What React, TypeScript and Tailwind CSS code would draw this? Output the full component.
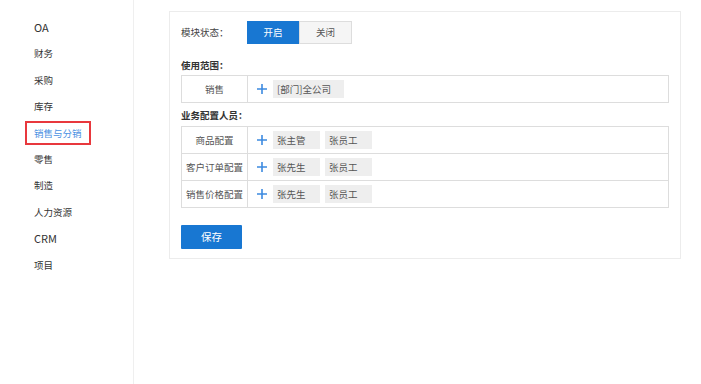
import React from 'react';

const menu = ['OA', '财务', '采购', '库存', '销售与分销', '零售', '制造', '人力资源', 'CRM', '项目'];

const staff = [
  { label: '商品配置', people: ['张主管', '张员工'] },
  { label: '客户订单配置', people: ['张先生', '张员工'] },
  { label: '销售价格配置', people: ['张先生', '张员工'] },
];

function Plus() {
  return (
    <svg width="10" height="10" viewBox="0 0 10 10" className="shrink-0">
      <path d="M5 0v10M0 5h10" stroke="#3d8ae0" strokeWidth="1.6" />
    </svg>
  );
}

function Tag({ text, w }: { text: string; w: string }) {
  return (
    <span className={`flex h-[18px] items-center bg-[#eeeeee] pl-[4px] text-[#555] ${w}`}>{text}</span>
  );
}

export default function App() {
  return (
    <div
      className="flex h-[384px] w-[701px] bg-white text-[9.5px] text-[#333]"
      style={{ fontFamily: '"Noto Sans CJK SC", "Noto Sans", sans-serif' }}
    >
      <aside className="w-[134px] shrink-0 border-r border-[#efefef] pt-[14px]">
        {menu.map((m) => {
          const active = m === '销售与分销';
          return (
            <div key={m} className="flex h-[26.4px] items-center pl-[25px]">
              <span
                className={`flex h-[24px] items-center border-2 px-[7px] ${
                  active ? 'border-[#e8383d] text-[#4a90e2]' : 'border-transparent'
                } ${m === 'OA' || m === 'CRM' ? 'text-[11px]' : ''}`}
              >
                {m}
              </span>
            </div>
          );
        })}
      </aside>

      <main className="pl-[35px] pt-[11px]">
        <div className="h-[248px] w-[512px] border border-[#ececec] px-[11px] pt-[9px]">
          <div className="flex items-center">
            <span className="w-[66px] text-[#444]">模块状态：</span>
            <div className="flex h-[23px]">
              <button className="w-[52px] bg-[#1877d2] text-white">开启</button>
              <button className="w-[53px] border border-[#dddddd] bg-[#f5f5f5] text-[#555]">关闭</button>
            </div>
          </div>

          <div className="mt-[13px] flex h-[16px] items-center font-bold">使用范围：</div>
          <table className="mt-[2px] w-full border-collapse">
            <tbody>
              <tr className="h-[27px]">
                <td className="w-[66px] border border-[#dddddd] text-center text-[#555]">销售</td>
                <td className="border border-[#dddddd] pl-[9px]">
                  <div className="flex items-center gap-[6px]">
                    <Plus />
                    <Tag text="[部门]全公司" w="w-[71px]" />
                  </div>
                </td>
              </tr>
            </tbody>
          </table>

          <div className="mt-[4px] flex h-[16px] items-center font-bold">业务配置人员：</div>
          <table className="mt-[3px] w-full border-collapse">
            <tbody>
              {staff.map((r) => (
                <tr key={r.label} className="h-[27px]">
                  <td className="w-[66px] border border-[#dddddd] text-center text-[#555]">{r.label}</td>
                  <td className="border border-[#dddddd] pl-[9px]">
                    <div className="flex items-center gap-[6px]">
                      <Plus />
                      <div className="flex gap-[5px]">
                        {r.people.map((p) => (
                          <Tag key={p} text={p} w="w-[47px]" />
                        ))}
                      </div>
                    </div>
                  </td>
                </tr>
              ))}
            </tbody>
          </table>

          <button className="mt-[17px] h-[24px] w-[61px] rounded-[1px] bg-[#1877d2] text-[10.5px] text-white">保存</button>
        </div>
      </main>
    </div>
  );
}
